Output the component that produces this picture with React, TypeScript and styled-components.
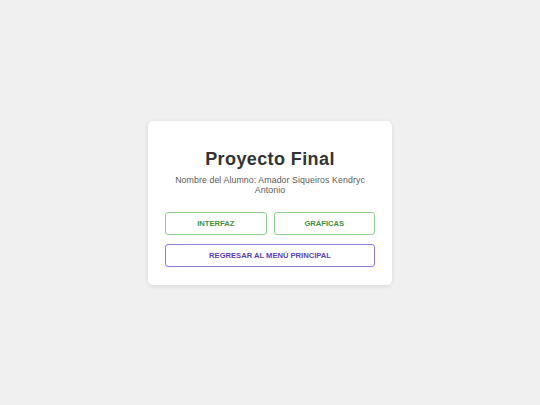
import styled, { createGlobalStyle } from "styled-components";

const GlobalStyle = createGlobalStyle`
  html, body {
    margin: 0;
    padding: 0;
    background: #f0f0f0;
    font-family: "Liberation Sans", Arial, sans-serif;
  }
`;

const Page = styled.div`
  width: 540px;
  height: 405px;
  display: flex;
  align-items: center;
  justify-content: center;
`;

const Card = styled.div`
  width: 244px;
  box-sizing: border-box;
  padding: 28px 17px 18px;
  background: #ffffff;
  border-radius: 5px;
  box-shadow: 0 1px 5px rgba(0, 0, 0, 0.1);
  text-align: center;
  margin-top: 1px;
`;

const Title = styled.h1`
  margin: 0;
  font-size: 18px;
  line-height: 21px;
  font-weight: 700;
  letter-spacing: 0.4px;
  color: #333333;
`;

const Subtitle = styled.p`
  margin: 6px 0 0;
  font-size: 8.8px;
  line-height: 9.5px;
  color: #5a5a5a;
  letter-spacing: 0.08px;
`;

const ButtonRow = styled.div`
  display: grid;
  grid-template-columns: 1fr 1fr;
  gap: 7px;
  margin-top: 17px;
`;

const Button = styled.button<{ $tone: "green" | "purple" }>`
  height: 23px;
  width: 100%;
  box-sizing: border-box;
  background: #ffffff;
  border: 1px solid ${({ $tone }) => ($tone === "green" ? "#8fd18f" : "#8b7be6")};
  border-radius: 3px;
  color: ${({ $tone }) => ($tone === "green" ? "#3f8f3f" : "#5a3ec4")};
  font-family: "Liberation Sans", Arial, sans-serif;
  font-size: 7.6px;
  font-weight: 700;
  text-transform: uppercase;
  cursor: pointer;
  padding: 0;
`;

const BackButton = styled(Button)`
  margin-top: 9px;
`;

export default function App() {
  return (
    <>
      <GlobalStyle />
      <Page>
        <Card>
          <Title>Proyecto Final</Title>
          <Subtitle>Nombre del Alumno: Amador Siqueiros Kendryc Antonio</Subtitle>
          <ButtonRow>
            <Button $tone="green">Interfaz</Button>
            <Button $tone="green">Gráficas</Button>
          </ButtonRow>
          <BackButton $tone="purple">Regresar al menú principal</BackButton>
        </Card>
      </Page>
    </>
  );
}
